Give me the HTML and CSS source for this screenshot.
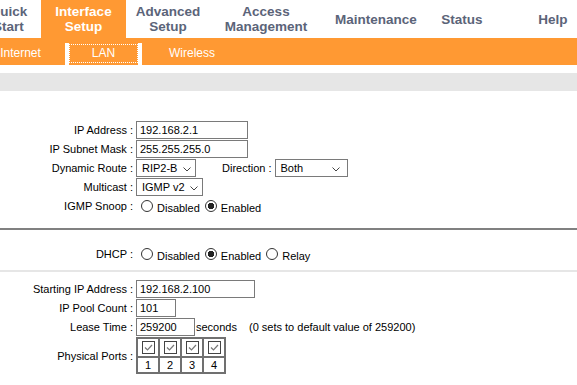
FILE: index.html
```html
<!DOCTYPE html>
<html lang="en">
  <head>
    <meta charset="UTF-8" />
    <meta name="viewport" content="width=device-width, initial-scale=1.0" />
    <title>Interface Setup - LAN</title>
    <link rel="stylesheet" href="styles.css">
  </head>
  <body>
    <div class="topnav">
      <a class="tab tab-quick">Quick<br />Start</a>
      <a class="tab tab-interface active">Interface<br />Setup</a>
      <a class="tab tab-advanced">Advanced<br />Setup</a>
      <a class="tab tab-access">Access<br />Management</a>
      <a class="tab tab-maint">Maintenance</a>
      <a class="tab tab-status">Status</a>
      <a class="tab tab-help">Help</a>
    </div>

    <div class="subnav">
      <a class="sub sub-internet">Internet</a>
      <a class="sub sub-lan active"><span>LAN</span></a>
      <a class="sub sub-wireless">Wireless</a>
    </div>

    <div class="title-bar"></div>

    <!-- router LAN settings -->
    <div class="form-block lan-block">
      <div class="row">
        <label class="label">IP Address :</label>
        <input type="text" class="field field-ip" value="192.168.2.1" />
      </div>
      <div class="row">
        <label class="label">IP Subnet Mask :</label>
        <input type="text" class="field field-ip" value="255.255.255.0" />
      </div>
      <div class="row">
        <label class="label">Dynamic Route :</label>
        <div class="select select-route">
          <span>RIP2-B</span>
          <svg width="8" height="5" viewBox="0 0 8 5"><polyline points="0.5,0.5 4,4 7.5,0.5" /></svg>
        </div>
        <label class="label-inline">Direction :</label>
        <div class="select select-direction">
          <span>Both</span>
          <svg width="8" height="5" viewBox="0 0 8 5"><polyline points="0.5,0.5 4,4 7.5,0.5" /></svg>
        </div>
      </div>
      <div class="row">
        <label class="label">Multicast :</label>
        <div class="select select-multicast">
          <span>IGMP v2</span>
          <svg width="8" height="5" viewBox="0 0 8 5"><polyline points="0.5,0.5 4,4 7.5,0.5" /></svg>
        </div>
      </div>
      <div class="row">
        <label class="label">IGMP Snoop :</label>
        <div class="radios">
          <input type="radio" name="snoop" />
          <span class="radio-text">Disabled</span>
          <input type="radio" name="snoop" checked />
          <span class="radio-text">Enabled</span>
        </div>
      </div>
    </div>

    <div class="rule-dark"></div>

    <div class="form-block dhcp-block">
      <div class="row">
        <label class="label">DHCP :</label>
        <div class="radios">
          <input type="radio" name="dhcp" />
          <span class="radio-text">Disabled</span>
          <input type="radio" name="dhcp" checked />
          <span class="radio-text">Enabled</span>
          <input type="radio" name="dhcp" />
          <span class="radio-text">Relay</span>
        </div>
      </div>
    </div>

    <div class="rule-light"></div>

    <div class="form-block pool-block">
      <div class="row">
        <label class="label">Starting IP Address :</label>
        <input type="text" class="field field-start" value="192.168.2.100" />
      </div>
      <div class="row">
        <label class="label">IP Pool Count :</label>
        <input type="text" class="field field-pool" value="101" />
      </div>
      <div class="row">
        <label class="label">Lease Time :</label>
        <input type="text" class="field field-lease" value="259200" />
        <span class="unit">seconds</span>
        <span class="hint">(0 sets to default value of 259200)</span>
      </div>
      <div class="row row-ports">
        <label class="label">Physical Ports :</label>
        <div class="ports">
          <div class="port-check"><svg width="13" height="13" viewBox="0 0 13 13"><rect x="0.5" y="0.5" width="12" height="12" /><polyline points="3,6.5 5.5,9 10,4" /></svg></div>
          <div class="port-check"><svg width="13" height="13" viewBox="0 0 13 13"><rect x="0.5" y="0.5" width="12" height="12" /><polyline points="3,6.5 5.5,9 10,4" /></svg></div>
          <div class="port-check"><svg width="13" height="13" viewBox="0 0 13 13"><rect x="0.5" y="0.5" width="12" height="12" /><polyline points="3,6.5 5.5,9 10,4" /></svg></div>
          <div class="port-check"><svg width="13" height="13" viewBox="0 0 13 13"><rect x="0.5" y="0.5" width="12" height="12" /><polyline points="3,6.5 5.5,9 10,4" /></svg></div>
          <div class="port-num">1</div>
          <div class="port-num">2</div>
          <div class="port-num">3</div>
          <div class="port-num">4</div>
        </div>
      </div>
    </div>
  </body>
</html>
```

FILE: styles.css
```css
html,
body {
  margin: 0;
  overflow: hidden;
  background: #fff;
}
body {
  font-family: "Liberation Sans", Arial, sans-serif;
  font-size: 11px;
  color: #000;
}

/* top menu */
.topnav {
  display: flex;
  height: 38px;
  margin-left: -24px;
}
.tab {
  display: flex;
  align-items: center;
  justify-content: center;
  flex: none;
  text-align: center;
  font-size: 13.5px;
  font-weight: bold;
  line-height: 15px;
  color: #5b6479;
}
.tab.active {
  background: #ff9933;
  color: #fff;
}
.tab-quick {
  width: 65px;
}
.tab-interface {
  width: 85px;
}
.tab-advanced {
  width: 84px;
}
.tab-access {
  width: 112px;
}
.tab-maint {
  width: 108px;
}
.tab-status {
  width: 64px;
}
.tab-help {
  width: 118px;
}

/* sub menu */
.subnav {
  display: flex;
  align-items: flex-end;
  height: 27px;
  margin-left: -24px;
  background: #ff9933;
}
.sub {
  display: flex;
  align-items: center;
  justify-content: center;
  flex: none;
  box-sizing: border-box;
  height: 22px;
  padding-bottom: 2px;
  font-size: 12px;
  color: #fff;
}
.sub-internet {
  width: 89px;
}
.sub-lan {
  width: 77px;
  align-items: flex-start;
  padding: 0;
  border-left: 4px solid #fff;
  border-right: 4px solid #fff;
}
.sub-lan span {
  display: block;
  box-sizing: border-box;
  width: 100%;
  height: 19px;
  margin-top: 1px;
  border: 1px dotted #fff;
  line-height: 17px;
  text-align: center;
}
.sub-wireless {
  width: 100px;
}

.title-bar {
  height: 18px;
  margin-top: 8px;
  background: #e6e6e6;
}
.rule-dark {
  height: 2px;
  background: #808080;
}
.rule-light {
  height: 2px;
  background: #e6e6e6;
}

/* form rows */
.form-block {
  display: flex;
  flex-direction: column;
  gap: 1px;
}
.lan-block {
  padding: 30px 0 13px;
}
.dhcp-block {
  padding: 15px 0 7px;
}
.pool-block {
  padding: 8px 0 0;
}
.row {
  display: flex;
  align-items: center;
  height: 18px;
}
.row-ports {
  height: auto;
}
.label {
  flex: none;
  width: 133px;
  margin-right: 3px;
  text-align: right;
}
.label-inline {
  margin: 0 3px 0 26px;
}

.field {
  box-sizing: border-box;
  height: 18px;
  margin: 0;
  padding: 0 3px;
  border: 1px solid #7a7a7a;
  font-family: inherit;
  font-size: 11px;
  color: #000;
  background: #fff;
}
.field-ip {
  width: 112px;
}
.field-start {
  width: 119px;
}
.field-pool {
  width: 40px;
}
.field-lease {
  width: 59px;
}
.unit {
  margin-left: 1px;
}
.hint {
  margin-left: 12px;
}

.select {
  display: flex;
  align-items: center;
  justify-content: space-between;
  box-sizing: border-box;
  height: 18px;
  padding: 0 4px 0 5px;
  border: 1px solid #7a7a7a;
  background: #fff;
}
.select svg {
  margin-top: 3px;
  fill: none;
  stroke: #444;
  stroke-width: 1;
}
.select-route {
  width: 60px;
}
.select-multicast {
  width: 67px;
}
.select-direction {
  width: 73px;
  padding-right: 7px;
}

/* radios */
.radios {
  display: flex;
  align-items: center;
}
.radios input {
  appearance: none;
  box-sizing: border-box;
  width: 12px;
  height: 12px;
  margin: 0 0 0 5px;
  border: 1px solid #333;
  border-radius: 50%;
  background: #fff;
}
.radios input:checked {
  background: radial-gradient(circle, #222 0 3px, #fff 3.5px);
}
.radio-text {
  margin-left: 4px;
  padding-top: 4px;
}

/* physical ports */
.ports {
  display: grid;
  grid-template-columns: repeat(4, 22px);
  grid-template-rows: 19px 16px;
  border: 1px solid #707070;
}
.port-check,
.port-num {
  display: flex;
  align-items: center;
  justify-content: center;
  border: 1px solid #707070;
}
.port-check svg rect {
  fill: #fff;
  stroke: #444;
}
.port-check svg polyline {
  fill: none;
  stroke: #777;
  stroke-width: 1.2;
}
```
